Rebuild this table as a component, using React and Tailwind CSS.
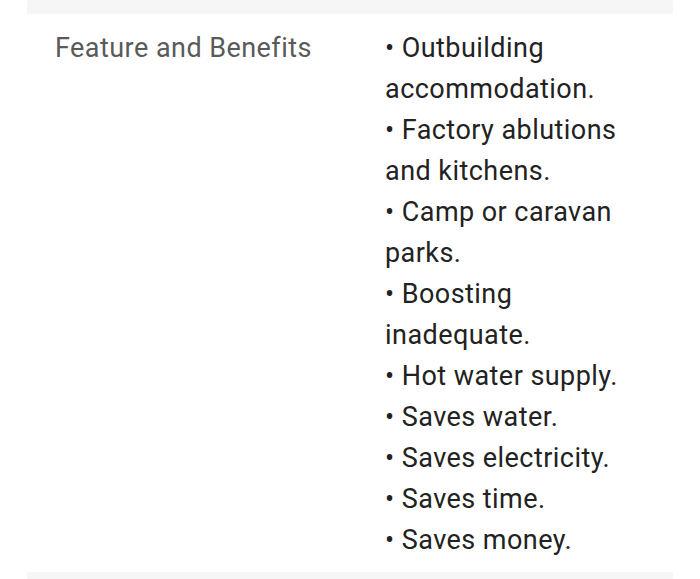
export default function App() {
  const items = [
    "Outbuilding accommodation.",
    "Factory ablutions and kitchens.",
    "Camp or caravan parks.",
    "Boosting inadequate.",
    "Hot water supply.",
    "Saves water.",
    "Saves electricity.",
    "Saves time.",
    "Saves money.",
  ];
  return (
    <div className="w-[700px] h-[579px] bg-white overflow-hidden flex flex-col" style={{ fontFamily: "Roboto, 'Noto Sans', sans-serif" }}>
      <div className="h-[14px] mx-[27px] bg-[#f6f6f6] shrink-0" />
      <div className="flex pt-[14px] pb-[11px] text-[27px] tracking-[0.45px] leading-[41px]">
        <div className="w-[385px] pl-[55px] text-[#5a5a5a] shrink-0">Feature and Benefits</div>
        <div className="w-[245px] text-[#222222]">
          {items.map((t) => (
            <div key={t}>• {t}</div>
          ))}
        </div>
      </div>
      <div className="flex-1 mx-[27px] bg-[#f6f6f6]" />
    </div>
  );
}
